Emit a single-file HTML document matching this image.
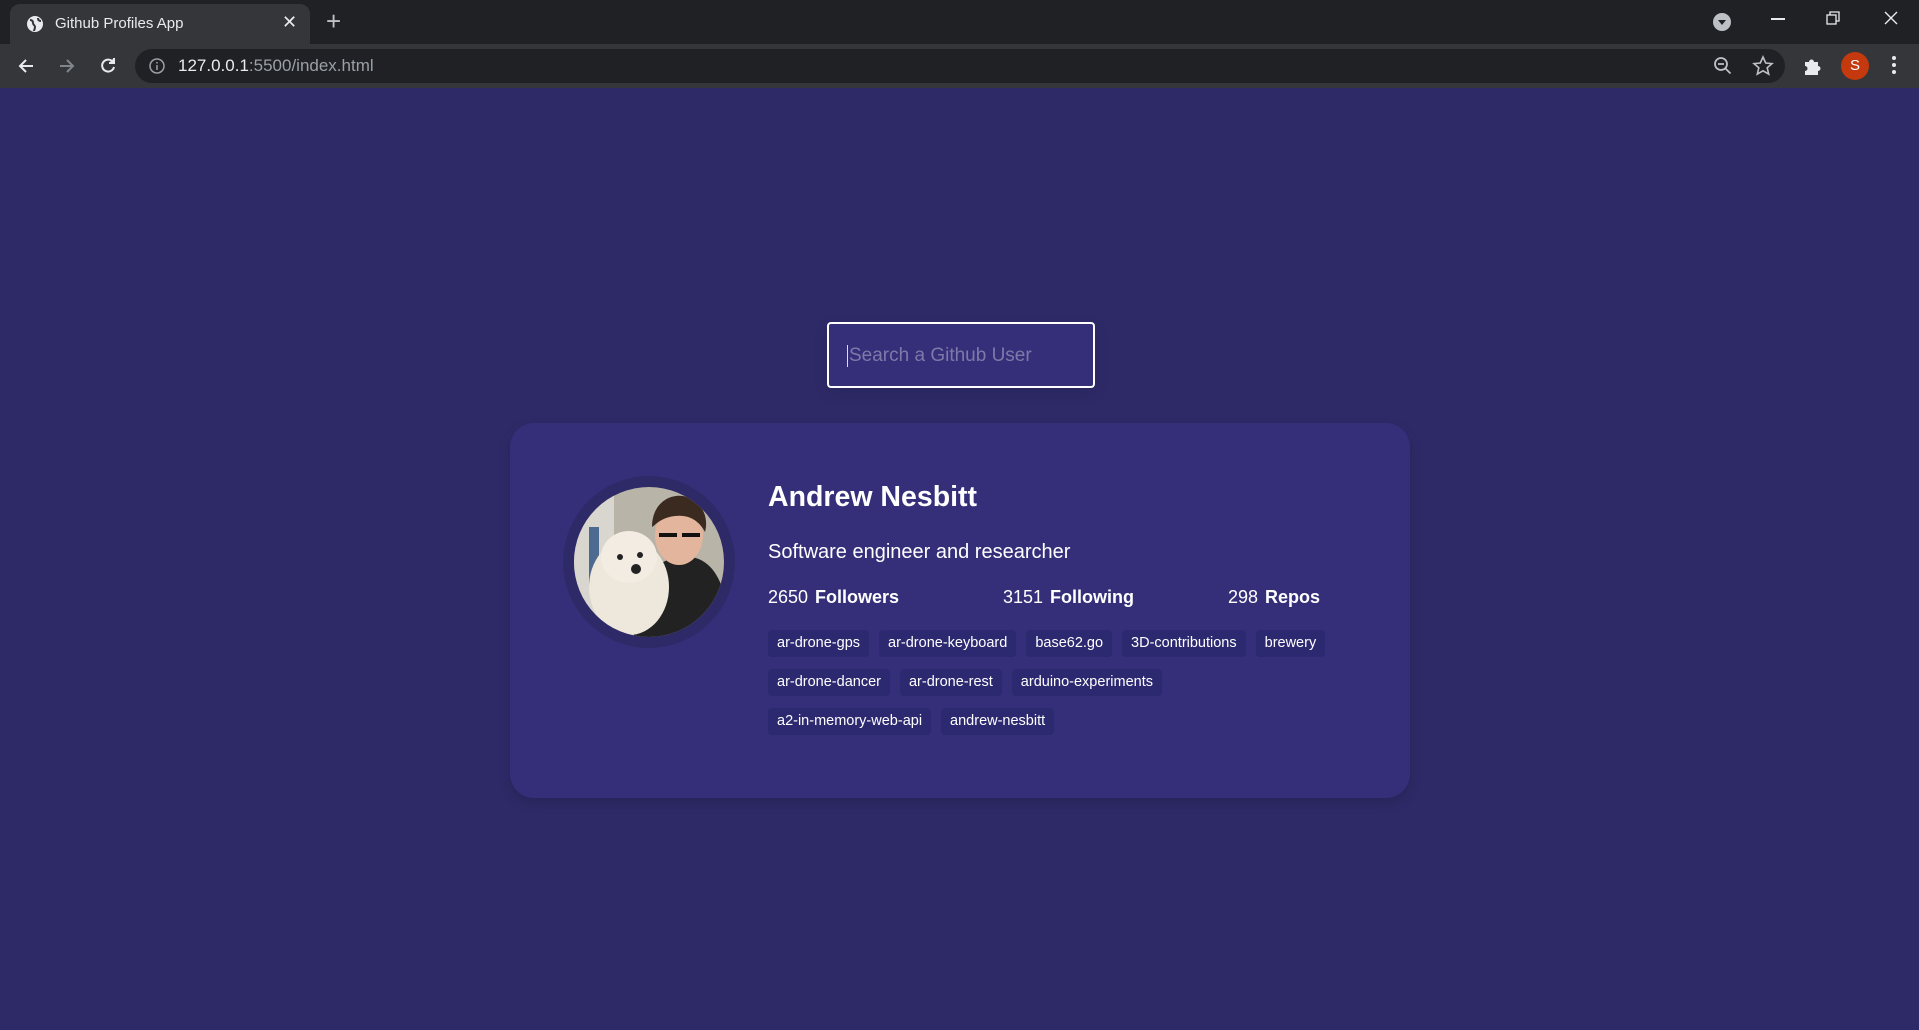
<!DOCTYPE html>
<html><head><meta charset="utf-8"><style>
*{box-sizing:border-box;margin:0;padding:0}
body{width:1919px;height:1030px;overflow:hidden;background:#2e2a68;font-family:"Liberation Sans",sans-serif;position:relative}
.tabbar{position:absolute;left:0;top:0;width:1919px;height:44px;background:#202124}
.tab{position:absolute;left:10px;top:4px;width:300px;height:40px;background:#35363a;border-radius:10px 10px 0 0;color:#e8eaed;font-size:15px}
.tab .t{position:absolute;left:45px;top:11px}
.tab .x{position:absolute;left:272px;top:8px;font-size:18px}
.plus{position:absolute;left:326px;top:6px;color:#bdc1c6;font-size:26px}
.toolbar{position:absolute;left:0;top:44px;width:1919px;height:44px;background:#35363a}
.omni{position:absolute;left:135px;top:5px;width:1650px;height:34px;background:#202124;border-radius:17px;color:#e8eaed;font-size:17px}
.omni .u{position:absolute;left:43px;top:7px}
.omni .u span{color:#9aa0a6}
.ic{position:absolute;color:#e8eaed}
.search{position:absolute;left:827px;top:322px;width:268px;height:66px;border:2px solid #fff;border-radius:4px;background:#352f7a;box-shadow:0 5px 15px rgba(0,0,0,.1)}
.search span{position:absolute;left:18px;top:21px;color:#7d79a8;font-size:19px;border-left:1.5px solid #ddd;padding-left:1px}
.card{position:absolute;left:510px;top:423px;width:900px;height:375px;background:#352f7a;border-radius:24px;box-shadow:0 5px 12px rgba(0,0,0,.15)}
.av{position:absolute;left:53px;top:53px;width:172px;height:172px;border-radius:50%;background:#2e2a68;padding:11px}
.av svg{display:block;border-radius:50%}
.info{position:absolute;left:258px;top:54px;color:#fff}
h2{font-size:28.5px;font-weight:bold;line-height:40px}
.bio{position:absolute;top:64px;font-size:20px;white-space:nowrap}
.st{position:absolute;top:110px;font-size:18px;white-space:nowrap}
.st b{margin-left:7px}
.tags{position:absolute;left:258px;top:207px;width:640px}
.row{display:flex;gap:10px;margin-bottom:12px}
.row span{background:#2c2970;color:#fff;font-size:14.5px;padding:5px 9px;border-radius:4px;line-height:17px}
</style></head><body>
<div class="tabbar">
<div class="tab"><svg style="position:absolute;left:16px;top:11px" width="18" height="18" viewBox="0 0 18 18"><circle cx="9" cy="9" r="8" fill="#e8eaed"/><path d="M4 5c2 0 3 1 3 3s2 2 2 4-1 3-1 4M12 3c0 2 1 3 3 3" stroke="#35363a" stroke-width="2" fill="none"/></svg><span class="t">Github Profiles App</span><span class="x">✕</span></div>
<div class="plus">+</div>
<svg class="ic" style="left:1713px;top:13px" width="18" height="18"><circle cx="9" cy="9" r="9" fill="#bdc1c6"/><path d="M5 7h8l-4 5z" fill="#202124"/></svg>
<div class="ic" style="left:1771px;top:18px;width:14px;height:1.5px;background:#e8eaed"></div>
<svg class="ic" style="left:1826px;top:11px" width="14" height="14" fill="none" stroke="#e8eaed" stroke-width="1.3"><rect x="1" y="4" width="9" height="9"/><path d="M4 4V1h9v9h-3"/></svg>
<svg class="ic" style="left:1884px;top:11px" width="14" height="14" stroke="#e8eaed" stroke-width="1.4"><path d="M1 1l12 12M13 1L1 13"/></svg>
</div>
<div class="toolbar">
<svg class="ic" style="left:17px;top:13px" width="18" height="18" fill="none" stroke="#e8eaed" stroke-width="2"><path d="M16 9H3M9 3L3 9l6 6"/></svg>
<svg class="ic" style="left:58px;top:13px" width="18" height="18" fill="none" stroke="#80868b" stroke-width="2"><path d="M2 9h13M9 3l6 6-6 6"/></svg>
<svg class="ic" style="left:98px;top:12px" width="20" height="20" fill="none" stroke="#e8eaed" stroke-width="2"><path d="M15 6a6 6 0 1 0 1 5"/><path d="M16 2v5h-5" fill="#e8eaed"/></svg>
<div class="omni"><svg style="position:absolute;left:14px;top:9px" width="16" height="16" fill="none" stroke="#9aa0a6" stroke-width="1.5"><circle cx="8" cy="8" r="7"/><path d="M8 7v5M8 4v1.5"/></svg><span class="u">127.0.0.1<span>:5500/index.html</span></span>
<svg style="position:absolute;left:1578px;top:7px" width="20" height="20" fill="none" stroke="#bdc1c6" stroke-width="1.8"><circle cx="8" cy="8" r="6"/><path d="M5 8h6M12.5 12.5l5 5"/></svg>
<svg style="position:absolute;left:1617px;top:6px" width="22" height="22" fill="none" stroke="#bdc1c6" stroke-width="1.6"><path d="M11 2l2.7 6 6.3.6-4.8 4.2 1.5 6.3L11 15.8 5.3 19.1l1.5-6.3L2 8.6 8.3 8z"/></svg>
</div>
<svg class="ic" style="left:1802px;top:12px" width="20" height="20" fill="#e8eaed"><path d="M3 6h4a2.5 2.5 0 0 1 5 0h4v4a2.5 2.5 0 0 1 0 5v4H3v-4a2.5 2.5 0 0 0 0-5z"/></svg>
<div class="ic" style="left:1841px;top:8px;width:28px;height:28px;border-radius:50%;background:#c5390e;color:#fff;font-size:15px;text-align:center;line-height:28px">S</div>
<div class="ic" style="left:1892px;top:12px;width:4px;font-size:0">
<div style="width:4px;height:4px;border-radius:2px;background:#e8eaed;margin-bottom:3px"></div><div style="width:4px;height:4px;border-radius:2px;background:#e8eaed;margin-bottom:3px"></div><div style="width:4px;height:4px;border-radius:2px;background:#e8eaed"></div></div>
</div>
<div class="search"><span>Search a Github User</span></div>
<div class="card">
<div class="av"><svg width="150" height="150" viewBox="0 0 150 150">
<rect width="150" height="150" fill="#b9b4a8"/><rect x="0" y="0" width="40" height="150" fill="#d9d6cf"/><rect x="15" y="40" width="10" height="60" fill="#4d6a90"/>
<path d="M60 150c0-40 10-75 45-80s50 30 50 80z" fill="#222"/>
<ellipse cx="105" cy="48" rx="24" ry="30" fill="#e2b59c"/><path d="M78 40c0-25 20-35 35-30s22 20 18 35c-5-10-15-18-30-16s-18 8-23 11z" fill="#3a2a20"/>
<path d="M85 48h18M108 48h18" stroke="#111" stroke-width="4"/>
<ellipse cx="55" cy="100" rx="40" ry="48" fill="#eee7dc"/><ellipse cx="55" cy="70" rx="28" ry="26" fill="#f2ece2"/><circle cx="62" cy="82" r="5" fill="#222"/><circle cx="46" cy="70" r="3" fill="#222"/><circle cx="66" cy="68" r="3" fill="#222"/>
</svg></div>
<div class="info"><h2>Andrew Nesbitt</h2>
<div class="bio">Software engineer and researcher</div>
<div class="st" style="left:0">2650<b>Followers</b></div>
<div class="st" style="left:235px">3151<b>Following</b></div>
<div class="st" style="left:460px">298<b>Repos</b></div></div>
<div class="tags">
<div class="row"><span>ar-drone-gps</span><span>ar-drone-keyboard</span><span>base62.go</span><span>3D-contributions</span><span>brewery</span></div>
<div class="row"><span>ar-drone-dancer</span><span>ar-drone-rest</span><span>arduino-experiments</span></div>
<div class="row"><span>a2-in-memory-web-api</span><span>andrew-nesbitt</span></div>
</div>
</div>
</body></html>
